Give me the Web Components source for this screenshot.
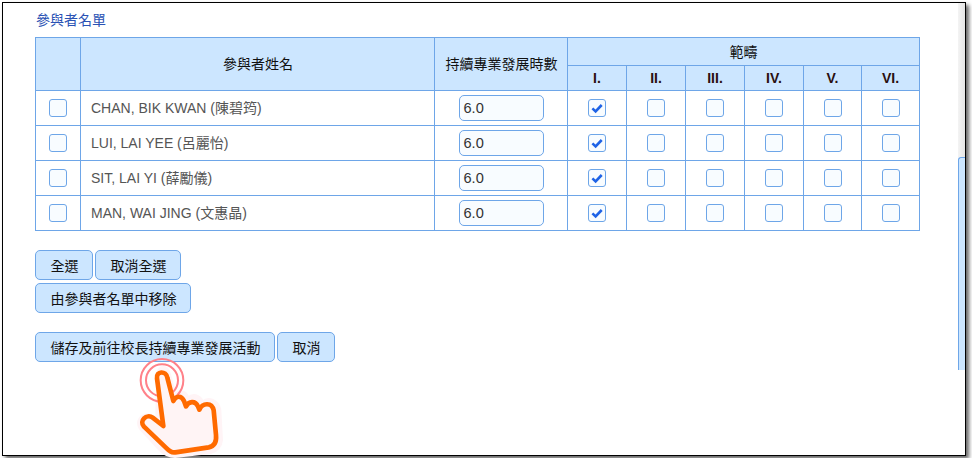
<!DOCTYPE html>
<html lang="zh-Hant">
<head>
<meta charset="utf-8">
<title>參與者名單</title>
<style>
	html, body { margin: 0; padding: 0; background: #fff; }
	body { font-family: "Liberation Sans", "Noto Sans CJK TC", sans-serif; font-size: 14px; }
</style>
</head>
<body>
<shot-frame>
	<h-title>參與者名單</h-title>
	<participant-table></participant-table>
	<button-row style="margin-top: 19px">
		<x-btn>全選</x-btn>
		<x-btn>取消全選</x-btn>
	</button-row>
	<button-row style="margin-top: 3px">
		<x-btn>由參與者名單中移除</x-btn>
	</button-row>
	<button-row style="margin-top: 19px">
		<x-btn>儲存及前往校長持續專業發展活動</x-btn>
		<x-btn>取消</x-btn>
	</button-row>
</shot-frame>
<script>
const frameTemplate = document.createElement('template');
frameTemplate.innerHTML = `
	<style>
		:host {
			display: flex;
			position: relative;
			box-sizing: border-box;
			width: 964px;
			height: 454px;
			margin: 2px;
			border: 1px solid #000;
			background: #fff;
			box-shadow: 3px 3px 4px #666;
		}
		.content {
			flex: 1;
			padding: 9px 0 0 32px;
		}
		.bar {
			width: 7px;
			display: flex;
			flex-direction: column;
		}
		.track {
			height: 154px;
			background: linear-gradient(to right, #f4f4f4, #e4e4e4);
		}
		.thumb {
			box-sizing: border-box;
			height: 213px;
			background: #cce6ff;
			border-left: 1px solid #6ea6e8;
			border-top: 1px solid #6ea6e8;
			border-radius: 3px 0 0 0;
		}
		svg {
			position: absolute;
			left: 107px;
			top: 342px;
		}
	</style>
	<div class="content"><slot></slot></div>
	<div class="bar"><div class="track"></div><div class="thumb"></div></div>
	<svg width="130" height="118" viewBox="0 0 390 354" fill="none">
		<path d="M142 85 C150 60 170 60 178 85 L196 150 C205 135 225 135 235 158 C248 145 268 150 278 170 C295 155 325 165 330 195 L335 285 C333 305 320 318 305 322 L195 335 C180 335 165 330 150 315 L90 250 C78 232 90 205 120 210 L140 220 Z" fill="#fff4f6" stroke="#fff4f6" stroke-width="8" stroke-linejoin="round"/>
		<circle cx="156" cy="106" r="64" stroke="#ff8189" stroke-width="6"/>
		<circle cx="156" cy="106" r="48" stroke="#ff8189" stroke-width="6"/>
		<path d="M141 100 C138 78 168 76 172 98 L190 168 C198 152 214 150 222 168 L228 184 C236 168 256 166 264 184 L268 194 C278 172 306 172 311 196 L318 270 C320 292 312 304 296 307 L196 322 C184 324 178 318 170 310 L102 245 C86 228 110 205 128 218 L160 243 Z" fill="#fff4f5" stroke="#ff6a00" stroke-width="14" stroke-linejoin="round" stroke-linecap="round"/>
	</svg>
`;

class ShotFrame extends HTMLElement {
	constructor() {
		super();
		this.attachShadow({ mode: 'open' }).appendChild(frameTemplate.content.cloneNode(true));
	}
}

class HTitle extends HTMLElement {
	constructor() {
		super();
		this.attachShadow({ mode: 'open' }).innerHTML = `
			<style>
				:host {
					display: block;
					height: 16px;
					line-height: 16px;
					margin-left: 1px;
					color: #2a52b4;
				}
			</style>
			<slot></slot>`;
	}
}

class XCheck extends HTMLElement {
	constructor() {
		super();
		const mark = this.hasAttribute('checked')
			? '<svg viewBox="0 0 16 16" width="16" height="16"><path d="M3.4 8.4 L6.6 11.4 L12.7 5" fill="none" stroke="#1f63e6" stroke-width="2.6"/></svg>'
			: '';
		this.attachShadow({ mode: 'open' }).innerHTML = `
			<style>
				:host {
					display: inline-flex;
					box-sizing: border-box;
					width: 18px;
					height: 18px;
					border: 1px solid #6ea6e8;
					border-radius: 3px;
					background: #f8fcff;
					vertical-align: top;
				}
			</style>
			${mark}`;
	}
}

class XHours extends HTMLElement {
	constructor() {
		super();
		this.attachShadow({ mode: 'open' }).innerHTML = `
			<style>
				:host {
					display: inline-block;
					box-sizing: border-box;
					width: 85px;
					height: 26px;
					padding: 0 4px;
					line-height: 25px;
					font-size: 14.6px;
					text-align: left;
					color: #333;
					background: #f8fcff;
					border: 1px solid #6ea6e8;
					border-radius: 5px;
					vertical-align: top;
				}
			</style>
			<slot></slot>`;
	}
}

class XBtn extends HTMLElement {
	constructor() {
		super();
		this.attachShadow({ mode: 'open' }).innerHTML = `
			<style>
				:host {
					display: inline-flex;
					align-items: center;
					box-sizing: border-box;
					height: 30px;
					padding: 0 13.5px 0 14.5px;
					color: #111;
					background: #cce6ff;
					border: 1px solid #6ea6e8;
					border-radius: 5px;
				}
			</style>
			<slot></slot>`;
	}
}

class ButtonRow extends HTMLElement {
	constructor() {
		super();
		this.attachShadow({ mode: 'open' }).innerHTML = `
			<style>
				:host { display: flex; gap: 2px; }
			</style>
			<slot></slot>`;
	}
}

const people = [
	'CHAN, BIK KWAN (陳碧筠)',
	'LUI, LAI YEE (呂麗怡)',
	'SIT, LAI YI (薛勵儀)',
	'MAN, WAI JING (文惠晶)',
];
const domains = ['I.', 'II.', 'III.', 'IV.', 'V.', 'VI.'];

class ParticipantTable extends HTMLElement {
	constructor() {
		super();
		const head = domains.map((d) => `<th class="sub">${d}</th>`).join('');
		const rows = people.map((name) => `
			<tr>
				<td class="c"><x-check></x-check></td>
				<td class="name">${name}</td>
				<td class="c"><x-hours>6.0</x-hours></td>
				${domains.map((d, i) => `<td class="c"><x-check ${i === 0 ? 'checked' : ''}></x-check></td>`).join('')}
			</tr>`).join('');
		this.attachShadow({ mode: 'open' }).innerHTML = `
			<style>
				:host { display: block; margin-top: 9px; }
				table {
					table-layout: fixed;
					border-collapse: collapse;
					width: 884px;
					font-size: 14px;
				}
				th, td { border: 1px solid #6ea6e8; padding: 0; }
				th {
					background: #cce6ff;
					color: #111;
					font-weight: normal;
				}
				th.sub { font-weight: bold; color: #2a1010; }
				.top { height: 28px; }
				.top th.range { padding-bottom: 1px; }
				.low { height: 25px; }
				tbody tr { height: 35px; }
				td.name { padding: 0 0 2px 10px; color: #555; }
				td.c { text-align: center; line-height: 0; }
				td.c x-hours { line-height: 25px; }
				th.mid { padding: 0 0 2px 1px; }
			</style>
			<table>
				<colgroup>
					<col style="width:45px"><col style="width:354px"><col style="width:133px">
					<col style="width:59px"><col style="width:59px"><col style="width:59px"><col style="width:59px">
					<col style="width:58px"><col style="width:58px">
				</colgroup>
				<thead>
					<tr class="top">
						<th rowspan="2"></th>
						<th rowspan="2" class="mid">參與者姓名</th>
						<th rowspan="2" class="mid">持續專業發展時數</th>
						<th colspan="6" class="range">範疇</th>
					</tr>
					<tr class="low">${head}</tr>
				</thead>
				<tbody>${rows}</tbody>
			</table>`;
	}
}

customElements.define('shot-frame', ShotFrame);
customElements.define('h-title', HTitle);
customElements.define('x-check', XCheck);
customElements.define('x-hours', XHours);
customElements.define('x-btn', XBtn);
customElements.define('button-row', ButtonRow);
customElements.define('participant-table', ParticipantTable);
</script>
</body>
</html>
